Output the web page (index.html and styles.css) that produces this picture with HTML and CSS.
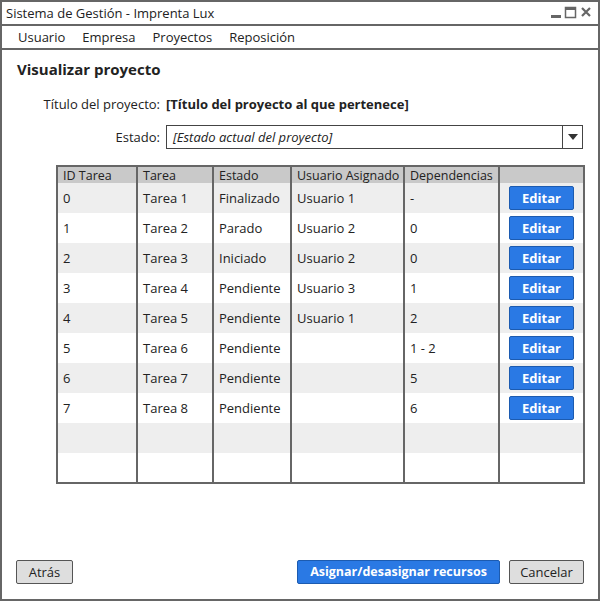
FILE: index.html
```html
<!DOCTYPE html>
<html lang="es">
<head>
<meta charset="utf-8">
<link rel="stylesheet" href="styles.css">
</head>
<body>
<div class="window">
  <div class="titlebar">
    <span class="title">Sistema de Gestión - Imprenta Lux</span>
    <span class="controls">
      <svg width="44" height="16" viewBox="0 0 44 16">
        <rect x="1" y="10" width="10" height="3" fill="#666"/>
        <rect x="15.5" y="2.5" width="10" height="10" fill="none" stroke="#666" stroke-width="1.5"/>
        <rect x="15" y="2" width="11" height="3" fill="#666"/>
        <path d="M32 3 L40 11 M40 3 L32 11" stroke="#666" stroke-width="2.2"/>
      </svg>
    </span>
  </div>
  <div class="menubar">
    <span class="menu-item">Usuario</span>
    <span class="menu-item">Empresa</span>
    <span class="menu-item">Proyectos</span>
    <span class="menu-item">Reposición</span>
  </div>
  <div class="content">
    <h1 class="heading">Visualizar proyecto</h1>
    <div class="form-row">
      <span class="label">Título del proyecto:</span>
      <span class="value">[Título del proyecto al que pertenece]</span>
    </div>
    <div class="form-row">
      <span class="label">Estado:</span>
      <div class="select">
        <span class="select-text">[Estado actual del proyecto]</span>
        <span class="select-arrow"><svg width="10" height="6" viewBox="0 0 10 6"><path d="M0 0 H10 L5 6 Z" fill="#333"/></svg></span>
      </div>
    </div>
    <table class="grid">
      <colgroup>
        <col class="c1"><col class="c2"><col class="c3"><col class="c4"><col class="c5"><col class="c6">
      </colgroup>
      <thead>
        <tr><th>ID Tarea</th><th>Tarea</th><th>Estado</th><th>Usuario Asignado</th><th>Dependencias</th><th></th></tr>
      </thead>
      <tbody>
        <tr><td>0</td><td>Tarea 1</td><td>Finalizado</td><td>Usuario 1</td><td>-</td><td class="act"><span class="btn-edit">Editar</span></td></tr>
        <tr><td>1</td><td>Tarea 2</td><td>Parado</td><td>Usuario 2</td><td>0</td><td class="act"><span class="btn-edit">Editar</span></td></tr>
        <tr><td>2</td><td>Tarea 3</td><td>Iniciado</td><td>Usuario 2</td><td>0</td><td class="act"><span class="btn-edit">Editar</span></td></tr>
        <tr><td>3</td><td>Tarea 4</td><td>Pendiente</td><td>Usuario 3</td><td>1</td><td class="act"><span class="btn-edit">Editar</span></td></tr>
        <tr><td>4</td><td>Tarea 5</td><td>Pendiente</td><td>Usuario 1</td><td>2</td><td class="act"><span class="btn-edit">Editar</span></td></tr>
        <tr><td>5</td><td>Tarea 6</td><td>Pendiente</td><td></td><td>1 - 2</td><td class="act"><span class="btn-edit">Editar</span></td></tr>
        <tr><td>6</td><td>Tarea 7</td><td>Pendiente</td><td></td><td>5</td><td class="act"><span class="btn-edit">Editar</span></td></tr>
        <tr><td>7</td><td>Tarea 8</td><td>Pendiente</td><td></td><td>6</td><td class="act"><span class="btn-edit">Editar</span></td></tr>
        <tr><td></td><td></td><td></td><td></td><td></td><td></td></tr>
        <tr><td></td><td></td><td></td><td></td><td></td><td></td></tr>
      </tbody>
    </table>
  </div>
  <div class="footer">
    <span class="btn btn-grey btn-back">Atrás</span>
    <span class="spacer"></span>
    <span class="btn btn-blue">Asignar/desasignar recursos</span>
    <span class="btn btn-grey btn-cancel">Cancelar</span>
  </div>
</div>
</body>
</html>
```
FILE: styles.css
```css
* { box-sizing: border-box; }
html, body { margin: 0; padding: 0; background: #fff; }
body {
  font-family: "Open Sans", Lato, sans-serif;
  font-size: 13px;
  color: #222;
}
.window {
  width: 600px;
  height: 601px;
  border: 2px solid #666;
  display: flex;
  flex-direction: column;
  background: #fff;
}
.titlebar {
  height: 24px;
  border-bottom: 2px solid #666;
  display: flex;
  align-items: center;
  padding: 0 4px 0 4px;
  white-space: nowrap;
}
.title { font-size: 13px; flex: 1; }
.controls { display: flex; align-items: center; height: 16px; }
.menubar {
  height: 24px;
  border-bottom: 2px solid #666;
  display: flex;
  align-items: center;
  padding-left: 16px;
  gap: 17px;
  white-space: nowrap;
}
.content {
  flex: 1;
  display: flex;
  flex-direction: column;
  padding: 9px 0 0 54px;
  white-space: nowrap;
}
.heading {
  margin: 0 0 0 -39px;
  font-size: 15px;
  font-weight: bold;
  height: 20px;
  line-height: 20px;
}
.form-row {
  display: flex;
  align-items: center;
  margin-top: 16px;
  height: 18px;
}
.form-row + .form-row { margin-top: 12px; height: 24px; }
.label {
  flex: 0 0 110px;
  width: 110px;
  min-width: 0;
  display: flex;
  justify-content: flex-end;
  padding-right: 6px;
}
.value { font-weight: bold; }
.select {
  width: 417px;
  height: 24px;
  border: 1.5px solid #444;
  display: flex;
  align-items: center;
}
.select-text { flex: 1; font-style: italic; padding-left: 6px; }
.select-arrow {
  width: 20px;
  height: 100%;
  border-left: 1.5px solid #444;
  display: flex;
  align-items: center;
  justify-content: center;
}
.grid {
  margin-top: 16px;
  border-collapse: collapse;
  width: 527px;
  border: 2px solid #666;
  table-layout: fixed;
}
.c1 { width: 80px; } .c2 { width: 76px; } .c3 { width: 78px; }
.c4 { width: 113px; } .c5 { width: 95px; } .c6 { width: 85px; }
.grid th {
  background: #c9c9c9;
  font-weight: normal;
  font-size: 12.5px;
  text-align: left;
  height: 17px;
  padding: 0 4px 0 5px;
  border-left: 2px solid #666;
  border-right: 2px solid #666;
  line-height: 15px;
  overflow: hidden;
}
.grid td {
  height: 30px;
  padding: 0 4px 0 5px;
  border-left: 2px solid #666;
  border-right: 2px solid #666;
}
.grid tbody tr:nth-child(odd) td { background: #eeeeee; }
.grid td.act { text-align: center; padding: 0; }
.btn-edit {
  display: inline-block;
  width: 65px;
  height: 24px;
  line-height: 22px;
  background: #2a79e4;
  color: #fff;
  border: 1px solid #1c5bb0;
  border-radius: 2px;
  font-weight: bold;
  text-align: center;
}
.footer {
  display: flex;
  align-items: center;
  padding: 0 14px 15px 14px;
  gap: 9px;
}
.spacer { flex: 1; }
.btn {
  height: 24px;
  line-height: 22px;
  text-align: center;
  border-radius: 2px;
  white-space: nowrap;
}
.btn-grey { background: #dedede; border: 1px solid #555; }
.btn-back { width: 57px; }
.btn-cancel { width: 75px; }
.btn-blue {
  width: 203px;
  background: #2a79e4;
  border: 1px solid #1c5bb0;
  color: #fff;
  font-weight: bold;
  font-size: 12.5px;
}
```
